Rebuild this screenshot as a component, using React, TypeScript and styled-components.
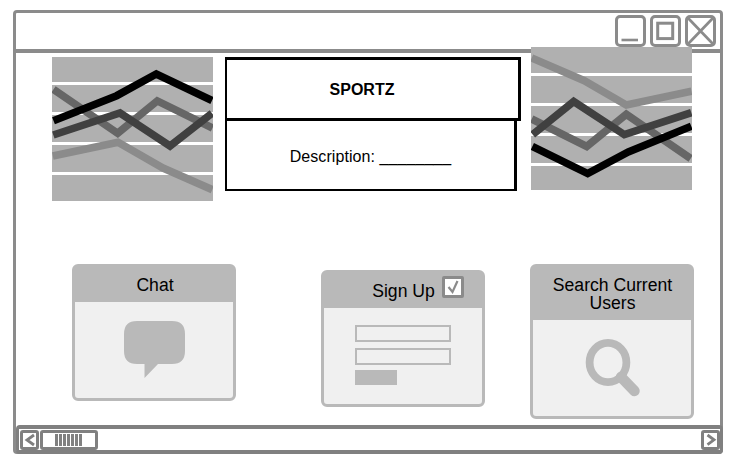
import React from "react";
import styled, { createGlobalStyle } from "styled-components";

const GlobalStyle = createGlobalStyle`
  * { box-sizing: border-box; }
  body { margin: 0; background: #fff; }
  svg { display: block; }
`;

const FRAME = "#8b8b8b";
const SCROLL = "#808080";
const CARD = "#b9b9b9";

const Page = styled.div`
  width: 732px;
  height: 464px;
  padding: 10px 9px 10px 13px;
  overflow: hidden;
  font-family: "Liberation Sans", Arial, sans-serif;
  color: #000;
`;

const Window = styled.div`
  width: 710px;
  height: 444px;
  border: 3px solid ${FRAME};
  border-radius: 4px;
  display: flex;
  flex-direction: column;
`;

const TitleBar = styled.header`
  height: 40px;
  flex: none;
  border-bottom: 4px solid ${FRAME};
  display: flex;
  justify-content: flex-end;
  gap: 4px;
  padding: 2px 3.7px 0 0;
`;

const WindowButton = styled.button`
  width: 31px;
  height: 32px;
  padding: 0;
  flex: none;
  border: 3px solid ${FRAME};
  border-radius: 5px;
  background: #fff;
  display: flex;
  align-items: center;
  justify-content: center;
`;

const Hero = styled.section`
  height: 148px;
  flex: none;
  display: flex;
  align-items: flex-start;
  padding-left: 36px;
`;

const ChartBox = styled.div<{ $shift: number }>`
  flex: none;
  margin-top: ${(p) => p.$shift}px;
`;

const Info = styled.div`
  width: 296px;
  margin: 4px 10px 0 12px;
  flex: none;
`;

const Heading = styled.h1`
  margin: 0;
  height: 64px;
  border: 3px solid #000;
  border-left-width: 2px;
  padding: 2px 21px 0 0;
  display: flex;
  align-items: center;
  justify-content: center;
  font-size: 16px;
  font-weight: 700;
`;

const Description = styled.p`
  margin: 0;
  width: 292px;
  height: 70px;
  border: solid #000;
  border-width: 0 3px 2px 2px;
  padding-top: 4px;
  display: flex;
  align-items: center;
  justify-content: center;
  font-size: 16px;
  letter-spacing: 0.07px;
  white-space: pre;
`;

const Cards = styled.section`
  flex: 1;
  min-height: 0;
  display: flex;
  align-items: flex-start;
  padding: 63px 0 0 56px;
`;

const Card = styled.article<{ $height: number; $left?: number; $top?: number }>`
  width: 164px;
  height: ${(p) => p.$height}px;
  flex: none;
  margin: ${(p) => p.$top ?? 0}px 0 0 ${(p) => p.$left ?? 0}px;
  border: 3px solid ${CARD};
  border-radius: 6px;
  background: #f0f0f0;
  display: flex;
  flex-direction: column;
`;

const CardHeader = styled.h2<{ $height: number; $pad?: string }>`
  margin: 0;
  height: ${(p) => p.$height}px;
  flex: none;
  padding: ${(p) => p.$pad ?? "9px 0 0 1px"};
  background: ${CARD};
  display: flex;
  justify-content: center;
  gap: 7px;
  font-size: 17.6px;
  font-weight: 400;
  line-height: 18px;
  text-align: center;
`;

const Check = styled.span`
  width: 22px;
  height: 22px;
  flex: none;
  margin-top: -6px;
  border: 3px solid ${FRAME};
  border-radius: 2px;
  background: #fff;
`;

const Drawing = styled.div<{ $left: number; $top: number }>`
  padding: ${(p) => p.$top}px 0 0 ${(p) => p.$left}px;
`;

const Form = styled.div`
  padding: 17px 0 0 31px;
  display: flex;
  flex-direction: column;
`;

const Field = styled.div`
  width: 96px;
  height: 17px;
  margin-bottom: 6px;
  border: 2px solid ${CARD};
`;

const Submit = styled.div`
  width: 42px;
  height: 15px;
  margin-top: -1px;
  background: ${CARD};
`;

const ScrollBar = styled.footer`
  height: 29px;
  flex: none;
  margin: 0 -3px -3px 0;
  border: solid ${SCROLL};
  border-width: 4px 3px 4px 3px;
  border-radius: 4px;
  background: #fff;
  display: flex;
  align-items: center;
  padding: 0 0 0 1px;
`;

const ScrollButton = styled.button`
  width: 19px;
  height: 20px;
  padding: 0;
  flex: none;
  border: 3px solid ${SCROLL};
  border-radius: 3px;
  background: #fff;
  display: flex;
  align-items: center;
  justify-content: center;
`;

const Thumb = styled.div`
  width: 58px;
  height: 20px;
  margin: 0 auto 0 1px;
  padding-right: 2px;
  border: 3px solid ${SCROLL};
  border-radius: 3px;
  display: flex;
  align-items: center;
  justify-content: center;
  gap: 1px;
`;

const Grip = styled.i`
  width: 3px;
  height: 12px;
  background: ${SCROLL};
`;

type ChartProps = { height: number; bands: [number, number][]; lines: [string, string][] };

const LineChart = ({ height, bands, lines }: ChartProps) => (
  <svg width="161" height={height} viewBox={`0 0 161 ${height}`}>
    {bands.map(([y, h]) => (
      <rect key={y} y={y} width="161" height={h} fill="#b0b0b0" />
    ))}
    {lines.map(([color, points]) => (
      <polyline key={color} points={points} fill="none" stroke={color} strokeWidth="7.6" />
    ))}
  </svg>
);

export default function App() {
  return (
    <>
      <GlobalStyle />
      <Page>
        <Window>
          <TitleBar>
            <WindowButton aria-label="Minimize">
              <svg width="25" height="26">
                <path d="M3.5 22H20" stroke={FRAME} strokeWidth="2.6" />
              </svg>
            </WindowButton>
            <WindowButton aria-label="Maximize">
              <svg width="25" height="26">
                <rect x="4.7" y="5.2" width="15" height="15.4" fill="none" stroke={FRAME} strokeWidth="3" />
              </svg>
            </WindowButton>
            <WindowButton aria-label="Close">
              <svg width="25" height="26">
                <path d="M0 0L25 26M25 0L0 26" stroke={FRAME} strokeWidth="2.8" />
              </svg>
            </WindowButton>
          </TitleBar>

          <Hero>
            <ChartBox $shift={4}>
              <LineChart
                height={144}
                bands={[[0, 25], [28, 27], [58, 27], [88, 27], [118, 26]]}
                lines={[
                  ["#8b8b8b", "0.8,99 66,85.3 111,111 160.3,132.7"],
                  ["#666666", "1.5,32.3 65.7,76.3 105.3,43.9 160.5,71"],
                  ["#404040", "1.3,78 68,56 118,89 160,56.3"],
                  ["#000000", "1.5,63.8 64.7,38.7 104.3,17 160,43.5"],
                ]}
              />
            </ChartBox>
            <Info>
              <Heading>SPORTZ</Heading>
              <Description>Description: ________</Description>
            </Info>
            <ChartBox $shift={-6}>
              <LineChart
                height={143}
                bands={[[0, 26], [29, 27], [59, 27], [89, 27], [119, 24]]}
                lines={[
                  ["#8b8b8b", "0.7,11 53.3,33.7 95.3,58 160.5,44.3"],
                  ["#666666", "0.7,72 55.7,99.4 95.3,67.3 159.7,111.5"],
                  ["#404040", "1.7,87.5 42.7,54.5 93.3,87.6 160.3,65.7"],
                  ["#000000", "1.3,99.5 56.7,126.6 97.3,105 160.3,79.3"],
                ]}
              />
            </ChartBox>
          </Hero>

          <Cards>
            <Card $height={137}>
              <CardHeader $height={35} $pad="9px 0 0 2px">Chat</CardHeader>
              <Drawing $left={49} $top={19}>
                <svg width="62" height="58">
                  <path
                    d="M13 0H48Q61 0 61 13V30Q61 43 48 43H34L20.5 57V43H13Q0 43 0 30V13Q0 0 13 0Z"
                    fill={CARD}
                  />
                </svg>
              </Drawing>
            </Card>
            <Card $height={137} $left={85} $top={5.5}>
              <CardHeader $height={35} $pad="9px 0 0 30px">
                <span>Sign Up</span>
                <Check>
                  <svg width="16" height="16">
                    <path d="M3.5 8L7.5 13L12.5 2" fill="none" stroke={FRAME} strokeWidth="2.2" />
                  </svg>
                </Check>
              </CardHeader>
              <Form>
                <Field />
                <Field />
                <Submit />
              </Form>
            </Card>
            <Card $height={155} $left={45}>
              <CardHeader $height={53}>
                Search Current
                <br />
                Users
              </CardHeader>
              <Drawing $left={52} $top={18}>
                <svg width="58" height="60">
                  <ellipse cx="23" cy="24.5" rx="18.4" ry="19.6" fill="none" stroke={CARD} strokeWidth="7.8" />
                  <path d="M36 39L49.5 53" stroke={CARD} strokeWidth="10.5" strokeLinecap="round" />
                </svg>
              </Drawing>
            </Card>
          </Cards>

          <ScrollBar>
            <ScrollButton aria-label="Scroll left">
              <svg width="13" height="14">
                <path d="M11 2L4 7L11 12" fill="none" stroke={SCROLL} strokeWidth="2.8" />
              </svg>
            </ScrollButton>
            <Thumb>
              {[0, 1, 2, 3, 4, 5, 6].map((n) => (
                <Grip key={n} />
              ))}
            </Thumb>
            <ScrollButton aria-label="Scroll right">
              <svg width="13" height="14">
                <path d="M3.5 2L10 6.8L3.5 11.6" fill="none" stroke={SCROLL} strokeWidth="2.8" />
              </svg>
            </ScrollButton>
          </ScrollBar>
        </Window>
      </Page>
    </>
  );
}
